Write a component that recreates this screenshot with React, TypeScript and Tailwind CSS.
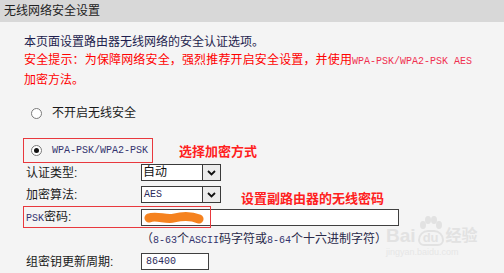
import React from "react";

const mono = "font-['Liberation_Mono',monospace]";

function Select({ value, isMono }: { value: string; isMono?: boolean }) {
  return (
    <div className="flex h-[17px] w-[80px] border border-[#3a3a3a] bg-white">
      <div
        className={
          isMono
            ? "flex-1 pl-[2px] text-[10px] leading-[15px] text-[#2a2a5a] font-['Liberation_Mono',monospace]"
            : "flex-1 pl-[1px] text-[12px] leading-[15px] text-[#111]"
        }
      >
        {value}
      </div>
      <div className="flex w-[18px] items-center justify-center border-l border-[#3a3a3a] bg-[#ececec]">
        <svg width="9" height="6" viewBox="0 0 9 6">
          <path d="M1 1 L4.5 4.5 L8 1" fill="none" stroke="#111" strokeWidth="1.8" />
        </svg>
      </div>
    </div>
  );
}

export default function App() {
  return (
    <div className="relative h-[273px] w-[504px] overflow-hidden bg-[#f4f4f4] font-['Liberation_Sans','Noto_Sans_CJK_SC',sans-serif] text-[12px] text-[#1a1a1a]">
      {/* Header */}
      <div className="flex h-[22px] items-center bg-[#d8d8d8] pl-[4px] text-[12px] text-[#222]">
        无线网络安全设置
      </div>

      {/* Intro */}
      <div className="mt-[11px] pl-[24px] text-[12px] leading-[18px]">
        <div className="text-[#1e1e4e]">本页面设置路由器无线网络的安全认证选项。</div>
        <div className="flex items-baseline whitespace-nowrap text-[#f00]">
          <span className="tracking-[0.15px]">安全提示：为保障网络安全，强烈推荐开启安全设置，并使用</span>
          <span className={`${mono} inline-block text-[10px] text-[#f03050]`}>WPA-PSK/WPA2-PSK AES</span>
        </div>
        <div className="text-[#f00]">加密方法。</div>
      </div>

      {/* Radio 1 */}
      <div className="mt-[15px] flex h-[18px] items-center gap-[10px] pl-[31px]">
        <div className="h-[11px] w-[11px] rounded-full border border-[#7a7a7a] bg-white" />
        <span className="text-[12px] text-[#1a1a1a]">不开启无线安全</span>
      </div>

      {/* Radio 2 with red box */}
      <div className="mt-[16px] flex h-[25px] items-center">
        <div className="ml-[23px] flex h-[25px] w-[130px] items-center gap-[10px] border border-[#e8383d] pl-[7px]">
          <div className="flex h-[11px] w-[11px] items-center justify-center rounded-full border border-[#7a7a7a] bg-white">
            <div className="h-[5px] w-[5px] rounded-full bg-[#111]" />
          </div>
          <span className={`${mono} text-[10px] text-[#33336e]`}>WPA-PSK/WPA2-PSK</span>
        </div>
        <span className="ml-[26px] mt-[3px] text-[13px] font-bold text-[#ff2020]">选择加密方式</span>
      </div>

      {/* 认证类型 */}
      <div className="mt-[1px] flex h-[17px] items-center">
        <div className="w-[141px] pl-[26px]">认证类型:</div>
        <Select value="自动" />
      </div>

      {/* 加密算法 */}
      <div className="mt-[5px] flex h-[17px] items-center">
        <div className="w-[141px] pl-[26px]">加密算法:</div>
        <Select value="AES" isMono />
        <span className="ml-[20px] mt-[8px] text-[13px] font-bold text-[#ff2020]">设置副路由器的无线密码</span>
      </div>

      {/* PSK */}
      <div className="relative mt-[3px] flex h-[22px] items-center">
        <div className="w-[141px] pl-[26px]">
          <span className={`${mono} text-[10px] text-[#33336e]`}>PSK</span>密码:
        </div>
        <div className="relative h-[17px] w-[258px] border border-[#404040] bg-white">
          <svg className="absolute left-[2px] top-[1px]" width="60" height="14" viewBox="0 0 60 14">
            <path
              d="M5 7 C 12 4, 22 9, 30 7 S 48 5, 55 8"
              fill="none"
              stroke="#f5821f"
              strokeWidth="9"
              strokeLinecap="round"
            />
          </svg>
        </div>
        <div className="absolute left-[23px] top-0 h-[22px] w-[188px] border border-[#e8383d]" />
      </div>

      {/* Hint */}
      <div className="mt-[2px] flex h-[18px] items-baseline whitespace-nowrap pl-[141px] text-[12px] leading-[18px] text-[#2a2a4a]">
        <span>（</span>
        <span className={`${mono} text-[10px] text-[#33336e]`}>8-63</span>
        <span>个</span>
        <span className={`${mono} text-[10px] text-[#33336e]`}>ASCII</span>
        <span>码字符或</span>
        <span className={`${mono} text-[10px] text-[#33336e]`}>8-64</span>
        <span>个十六进制字符）</span>
      </div>

      {/* 组密钥更新周期 */}
      <div className="mt-[5px] flex h-[17px] items-center">
        <div className="w-[141px] pl-[26px]">组密钥更新周期:</div>
        <div className={`h-[17px] w-[68px] border border-[#404040] bg-white pl-[4px] ${mono} text-[10px] leading-[15px] text-[#2a2a5a]`}>
          86400
        </div>
      </div>

      {/* Baidu watermark */}
      <div className="pointer-events-none absolute left-[386px] top-[216px] flex flex-col items-start text-[#e2e2e2]">
        <div className="flex items-end">
          <span className="text-[19px] font-bold leading-[20px]">Bai</span>
          <div className="relative mx-[1px] flex flex-col items-center">
            <svg width="28" height="14" viewBox="0 0 28 14">
              <ellipse cx="6" cy="9" rx="3" ry="4" fill="#e2e2e2" />
              <ellipse cx="11" cy="4" rx="3" ry="4" fill="#e2e2e2" />
              <ellipse cx="17" cy="4" rx="3" ry="4" fill="#e2e2e2" />
              <ellipse cx="22" cy="9" rx="3" ry="4" fill="#e2e2e2" />
            </svg>
            <div className="flex h-[16px] w-[26px] items-center justify-center rounded-t-[10px] rounded-b-[6px] border-2 border-[#e2e2e2] text-[13px] font-bold leading-[12px]">
              du
            </div>
          </div>
          <span className="text-[16px] font-bold leading-[20px]">经验</span>
        </div>
        <div className="mt-[1px] text-[9px] leading-[10px] text-[#e6e6e6]">jingyan.baidu.com</div>
      </div>
    </div>
  );
}
